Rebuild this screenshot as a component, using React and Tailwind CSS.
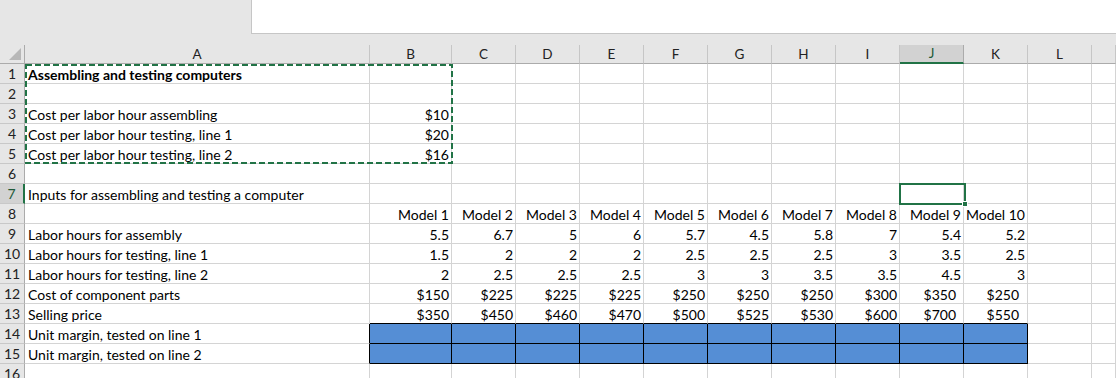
import React from "react";

const cols = ["A", "B", "C", "D", "E", "F", "G", "H", "I", "J", "K", "L", ""];

// spreadsheet content, row number -> cells
const data = {
  1: { A: "Assembling and testing computers", bold: true },
  3: { A: "Cost per labor hour assembling", vals: ["$10"] },
  4: { A: "Cost per labor hour testing, line 1", vals: ["$20"] },
  5: { A: "Cost per labor hour testing, line 2", vals: ["$16"] },
  7: { A: "Inputs for assembling and testing a computer" },
  8: { vals: ["Model 1", "Model 2", "Model 3", "Model 4", "Model 5", "Model 6", "Model 7", "Model 8", "Model 9", "Model 10"] },
  9: { A: "Labor hours for assembly", vals: ["5.5", "6.7", "5", "6", "5.7", "4.5", "5.8", "7", "5.4", "5.2"] },
  10: { A: "Labor hours for testing, line 1", vals: ["1.5", "2", "2", "2", "2.5", "2.5", "2.5", "3", "3.5", "2.5"] },
  11: { A: "Labor hours for testing, line 2", vals: ["2", "2.5", "2.5", "2.5", "3", "3", "3.5", "3.5", "4.5", "3"] },
  12: { A: "Cost of component parts", vals: ["$150", "$225", "$225", "$225", "$250", "$250", "$250", "$300", "$350", "$250"], money: true },
  13: { A: "Selling price", vals: ["$350", "$450", "$460", "$470", "$500", "$525", "$530", "$600", "$700", "$550"], money: true },
  14: { A: "Unit margin, tested on line 1", blue: true },
  15: { A: "Unit margin, tested on line 2", blue: true },
  16: {},
};

const Cell = ({ row, col, ci }) => {
  const r = data[row] || {};
  const isBlue = r.blue && ci >= 1 && ci <= 10;
  const aboveBlue = row === 13 && ci >= 1 && ci <= 10;
  const leftOfBlue = r.blue && ci === 0;

  let text = "";
  if (col === "A") text = r.A || "";
  else if (r.vals && ci - 1 < r.vals.length) text = r.vals[ci - 1];

  // money in J and K sits a bit further from the edge
  let pad = "pr-[2px]";
  if (r.money && col === "J") pad = "pr-[7px]";
  if (r.money && col === "K") pad = "pr-[8px]";

  let border = "border-r border-b border-[#d4d4d4]";
  if (isBlue) border = "border-r border-b border-black";
  else if (aboveBlue) border = "border-r border-b border-r-[#d4d4d4] border-b-black";
  else if (leftOfBlue) border = "border-r border-b border-r-black border-b-[#d4d4d4]";

  return (
    <div
      className={`h-[20px] flex items-end whitespace-nowrap overflow-visible ${border} ${
        isBlue ? "bg-[#558ed5]" : "bg-white"
      } ${col === "A" ? "pl-[3px] justify-start" : `justify-end ${pad}`} ${r.bold && col === "A" ? "font-bold" : ""}`}
    >
      {text}
    </div>
  );
};

export default function App() {
  const rows = Array.from({ length: 16 }, (_, i) => i + 1);

  return (
    <div
      className="relative w-[1116px] h-[378px] overflow-hidden bg-white text-[14px] text-black leading-[17px]"
      style={{ fontFamily: "Lato, 'Open Sans', sans-serif" }}
    >
      {/* formula bar area */}
      <div className="h-[45px] bg-[#e6e6e6]">
        <div className="ml-[251px] h-[34px] bg-white border-l border-b border-[#c6c6c6]" />
      </div>

      <div className="grid grid-cols-[25px_345px_82px_repeat(10,64px)_24px]">
        {/* corner */}
        <div className="relative h-[19px] bg-[#e6e6e6] border-r border-b border-[#ababab]">
          <div className="absolute right-[3px] bottom-[3px] w-0 h-0 border-l-[12px] border-l-transparent border-b-[12px] border-b-[#b7b7b7]" />
        </div>
        {cols.map((c, i) => (
          <div
            key={i}
            className={`h-[19px] flex items-center justify-center text-[13.5px] border-r ${
              c === "J"
                ? "bg-[#d2d2d2] border-r-[#ababab] border-b-2 border-b-[#217346] text-[#1e5a38]"
                : "bg-[#e6e6e6] border-r-[#c6c6c6] border-b border-b-[#ababab] text-[#222]"
            }`}
          >
            {c}
          </div>
        ))}

        {rows.map((row) => (
          <React.Fragment key={row}>
            <div
              className={`h-[20px] flex items-center justify-center text-[14px] border-b border-b-[#c8c8c8] ${
                row === 7
                  ? "bg-[#d2d2d2] border-r-2 border-r-[#217346] text-[#1e5a38]"
                  : "bg-[#e6e6e6] border-r border-r-[#ababab] text-[#222]"
              }`}
            >
              {row}
            </div>
            {cols.map((c, ci) => (
              <Cell key={ci} row={row} col={c} ci={ci} />
            ))}
          </React.Fragment>
        ))}
      </div>

      {/* copy marquee around A1:B5 */}
      <svg className="absolute left-[24px] top-[63px]" width="430" height="103">
        <rect x="2" y="2" width="426" height="98" fill="none" stroke="#217346" strokeWidth="2" strokeDasharray="6 3" />
      </svg>

      {/* active cell J7 */}
      <div className="absolute left-[899px] top-[183px] w-[67px] h-[22px] border-2 border-[#217346]" />
      <div className="absolute left-[962px] top-[201px] w-[6px] h-[6px] bg-[#217346] border border-white" />
    </div>
  );
}
